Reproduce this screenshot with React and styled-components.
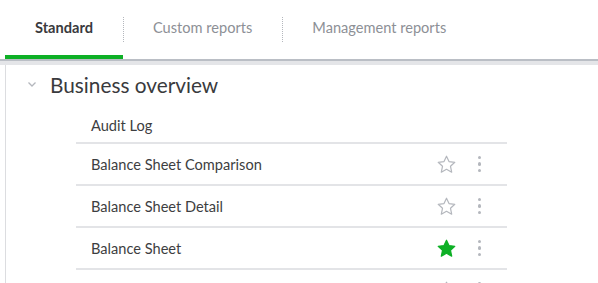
import React from 'react';
import styled, { createGlobalStyle } from 'styled-components';

const GlobalStyle = createGlobalStyle`
  body {
    margin: 0;
    background: #ffffff;
    font-family: Lato, "Open Sans", sans-serif;
    overflow: hidden;
  }
`;

const Page = styled.div`
  width: 598px;
  height: 283px;
  overflow: hidden;
`;

const TabBar = styled.div`
  display: flex;
  align-items: stretch;
  height: 59px;
  padding-left: 5px;
  border-bottom: 2px solid #babec5;
  box-shadow: 0 4px 0 #e4e5e8;
`;

const Tab = styled.div`
  position: relative;
  display: flex;
  align-items: center;
  justify-content: center;
  padding: 0 30px;
  font-size: 14.6px;
  font-weight: ${p => (p.active ? 700 : 400)};
  color: ${p => (p.active ? '#393a3d' : '#8d9096')};
  border-bottom: 4px solid ${p => (p.active ? '#0eb026' : 'transparent')};

  &:not(:first-child)::before {
    content: '';
    position: absolute;
    left: 0;
    top: 17px;
    height: 25px;
    border-left: 1px dotted #b4b7bd;
  }
`;

const Content = styled.div`
  margin: 4px 0 0 5px;
  border-left: 1px solid #dcdde0;
  height: 300px;
`;

const SectionHeader = styled.div`
  display: flex;
  align-items: center;
  height: 36px;
  padding: 1px 0 0 21px;
  gap: 13px;
`;

const Chevron = styled.svg`
  width: 10px;
  height: 10px;
`;

const SectionTitle = styled.div`
  font-size: 20.8px;
  color: #393a3d;
`;

const List = styled.div`
  margin-left: 70px;
  width: 431px;
`;

const Row = styled.div`
  box-sizing: border-box;
  display: flex;
  align-items: center;
  height: 42px;
  padding: ${p => (p.first ? '6px' : '0')} 26px 0 15px;
  border-bottom: 2px solid #e3e4e7;
  font-size: 14.6px;
  color: #3d3e41;
`;

const Name = styled.div`
  flex: 1;
`;

const StarIcon = styled.svg`
  width: 19px;
  height: 19px;
  margin-right: 22px;
`;

const Dots = styled.div`
  display: flex;
  flex-direction: column;
  gap: 3.3px;

  span {
    width: 3.4px;
    height: 3.4px;
    border-radius: 50%;
    background: #b4b7bd;
  }
`;

const STAR = 'M9.5 1.2l2.5 5.4 5.8.7-4.3 4 1.2 5.9-5.2-2.9-5.2 2.9 1.2-5.9-4.3-4 5.8-.7z';

const Star = ({ on }) => (
  <StarIcon viewBox="0 0 19 19">
    <path
      d={STAR}
      fill={on ? '#0eb026' : '#fff'}
      stroke={on ? '#0eb026' : '#b4b7bd'}
      strokeWidth="1.2"
      strokeLinejoin="round"
    />
  </StarIcon>
);

// the last row only peeks in at the bottom edge, its name is below the fold
const reports = [
  { name: 'Balance Sheet Comparison', fav: false },
  { name: 'Balance Sheet Detail', fav: false },
  { name: 'Balance Sheet', fav: true },
  { name: '', fav: false },
];

export default function App() {
  return (
    <Page>
      <GlobalStyle />
      <TabBar>
        <Tab active>Standard</Tab>
        <Tab>Custom reports</Tab>
        <Tab>Management reports</Tab>
      </TabBar>
      <Content>
        <SectionHeader>
          <Chevron viewBox="0 0 10 10">
            <path d="M1.5 3.5L5 7l3.5-3.5" fill="none" stroke="#b4b7bd" strokeWidth="1.3" />
          </Chevron>
          <SectionTitle>Business overview</SectionTitle>
        </SectionHeader>
        <List>
          <Row first>
            <Name>Audit Log</Name>
          </Row>
          {reports.map((r, i) => (
            <Row key={i}>
              <Name>{r.name}</Name>
              <Star on={r.fav} />
              <Dots><span /><span /><span /></Dots>
            </Row>
          ))}
        </List>
      </Content>
    </Page>
  );
}
